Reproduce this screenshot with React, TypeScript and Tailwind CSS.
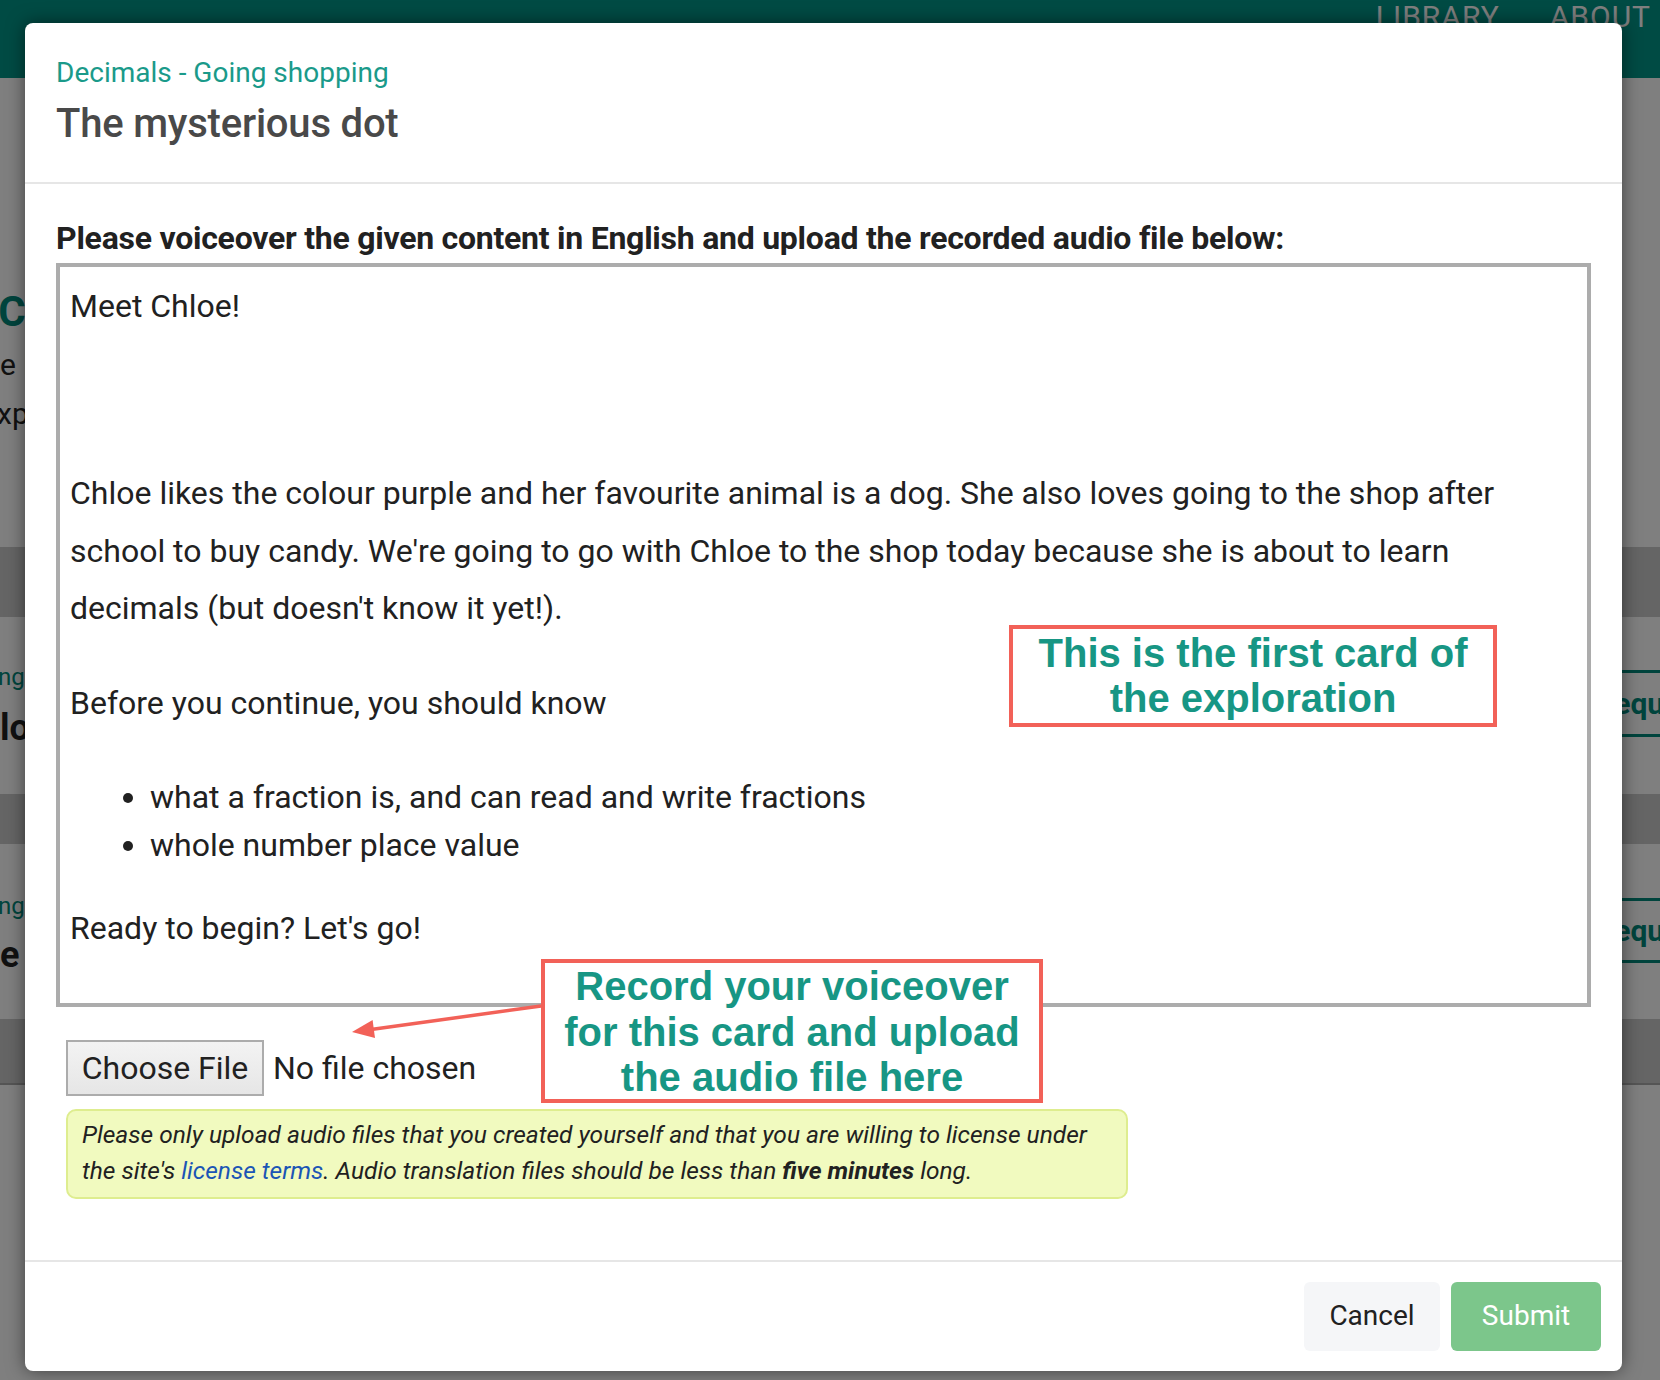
import React from "react";

const OpportunityRow = ({
  topic,
  title,
  rowClass,
  topicClass,
  titleClass,
  buttonClass,
}: any) => {
  return (
    <div className={`flex items-start justify-between ${rowClass}`}>
      <div className="flex flex-col">
        <span className={`text-[24px] leading-[28px] text-[#00897b] ${topicClass}`}>{topic}</span>
        <span className={`text-[36px] font-bold leading-[40px] text-[#222] ${titleClass}`}>{title}</span>
      </div>
      <span
        className={`mr-[-90px] flex w-[160px] items-center border-[3px] border-[#00897b] pl-[2px] text-[30px] font-bold text-[#00897b] ${buttonClass}`}
      >
        Request
      </span>
    </div>
  );
};

const BackgroundPage = () => {
  return (
    <div className="flex flex-col">
      <header className="flex h-[78px] justify-end gap-[50px] bg-[#009688] pr-[9px] pt-[2px] text-[30px] leading-[30px] tracking-[1px] text-white">
        <span>LIBRARY</span>
        <span>ABOUT</span>
      </header>

      {/* page content peeking out from behind the modal */}
      <section className="h-[469px] pt-[210px]">
        <p className="-ml-[14px] text-[42px] font-bold leading-[48px] text-[#00897b]">.Chapters</p>
        <p className="mt-[4px] text-[30px] leading-[49px] text-[#222]">e lessons</p>
        <p className="-ml-[3px] text-[30px] leading-[49px] text-[#222]">xplorations</p>
      </section>
      <div className="h-[70px] bg-[#cbcbcb]" />
      <OpportunityRow
        topic="ng shopping"
        title="lo"
        rowClass="h-[177px]"
        topicClass="-ml-[2px] mt-[46px]"
        titleClass="mt-[17px]"
        buttonClass="mt-[53px] h-[67px]"
      />
      <div className="h-[50px] bg-[#cbcbcb]" />
      <OpportunityRow
        topic="ng shopping"
        title="e"
        rowClass="h-[175px]"
        topicClass="-ml-[2px] mt-[48px]"
        titleClass="mt-[15px]"
        buttonClass="mt-[54px] h-[65px]"
      />
      <div className="h-[66px] border-b-2 border-[#aaaaaa] bg-[#cbcbcb]" />
    </div>
  );
};

const VoiceoverModal = () => {
  return (
    <div className="relative w-[1597px] rounded-[8px] bg-white shadow-[0_0_18px_rgba(0,0,0,0.5)]">
      {/* Header */}
      <div className="border-b-2 border-[#e6e6e6] px-[31px] pb-[34px] pt-[32px]">
        <p className="text-[28px] leading-[36px] text-[#1a9a8a]">Decimals - Going shopping</p>
        <h2 className="mt-[9px] text-[40px] font-medium leading-[48px] tracking-[-0.2px] text-[#494949]">
          The mysterious dot
        </h2>
      </div>

      {/* Body */}
      <div className="px-[31px] pb-[60.5px] pt-[35.8px]">
        <p className="text-[32px] font-bold leading-[36px] tracking-[-0.25px] text-[#212121]">
          Please voiceover the given content in English and upload the recorded audio file below:
        </p>
        <div className="mt-[6.8px] border-4 border-[#acacac] px-[10px] pb-[45px] pt-[11.4px] text-[32px] leading-[57.6px] text-[#212121]">
          <p>Meet Chloe!</p>
          <p className="mt-[129.7px]">
            Chloe likes the colour purple and her favourite animal is a dog. She also loves going to
            the shop after school to buy candy. We're going to go with Chloe to the shop today
            because she is about to learn decimals (but doesn't know it yet!).
          </p>
          <p className="mt-[36.8px]">Before you continue, you should know</p>
          <ul className="mt-[40.1px] list-disc pl-[80px] leading-[48.5px]">
            <li>what a fraction is, and can read and write fractions</li>
            <li>whole number place value</li>
          </ul>
          <p className="mt-[30.65px]">Ready to begin? Let's go!</p>
        </div>

        {/* File input */}
        <div className="ml-[10px] mt-[32.8px] flex items-center">
          <span className="flex h-[56px] w-[198px] items-center justify-center border-2 border-[#acacac] bg-linear-to-b from-[#f3f3f3] to-[#e6e6e6] text-[32px] text-[#212121]">
            Choose File
          </span>
          <span className="ml-[9px] text-[32px] text-[#212121]">No file chosen</span>
        </div>

        <div className="ml-[10px] mt-[13.85px] h-[90px] w-[1062px] rounded-[10px] border-2 border-[#deed8f] bg-[#f1fabf] px-[14px] pt-[5.6px] text-[24.5px] italic leading-[36px] text-[#212121]">
          Please only upload audio files that you created yourself and that you are willing to
          license under the site's <a className="text-[#1b55b5]">license terms</a>. Audio
          translation files should be less than <b>five minutes</b> long.
        </div>
      </div>

      {/* Footer */}
      <div className="flex justify-end gap-[11px] border-t-2 border-[#e6e6e6] px-[21px] py-[20px]">
        <button type="button" className="h-[69px] w-[136px] rounded-[6px] bg-[#f5f6f8] text-[28px] text-[#212121]">
          Cancel
        </button>
        <button type="button" className="h-[69px] w-[150px] rounded-[6px] bg-[#7cc68b] text-[28px] text-white">
          Submit
        </button>
      </div>

      {/* Annotations drawn on top of the screenshot */}
      <svg className="pointer-events-none absolute inset-0 h-full w-full overflow-visible">
        <line x1="516" y1="983" x2="346" y2="1006.5" stroke="#f26158" strokeWidth="3.5" />
        <polygon points="327,1009 350,1015 347.6,997" fill="#f26158" />
      </svg>
      <div className="absolute left-[984px] top-[602px] h-[102px] w-[488px] border-4 border-[#f26158] bg-white pt-[2px] text-center font-['Liberation_Sans',Arial,sans-serif] text-[40px] font-bold leading-[45px] text-[#179684]">
        This is the first card of
        <br />
        the exploration
      </div>
      <div className="absolute left-[516px] top-[936px] h-[144px] w-[502px] border-4 border-[#f26158] bg-white pt-[1px] text-center font-['Liberation_Sans',Arial,sans-serif] text-[40px] font-bold leading-[45.5px] text-[#179684]">
        Record your voiceover
        <br />
        for this card and upload
        <br />
        the audio file here
      </div>
    </div>
  );
};

export default function App() {
  return (
    <div className="relative h-[1380px] w-full overflow-hidden bg-white font-['Roboto','Liberation_Sans',sans-serif]">
      <BackgroundPage />
      <div className="absolute inset-0 bg-black/50 pl-[25px] pt-[23px]">
        <VoiceoverModal />
      </div>
    </div>
  );
}
